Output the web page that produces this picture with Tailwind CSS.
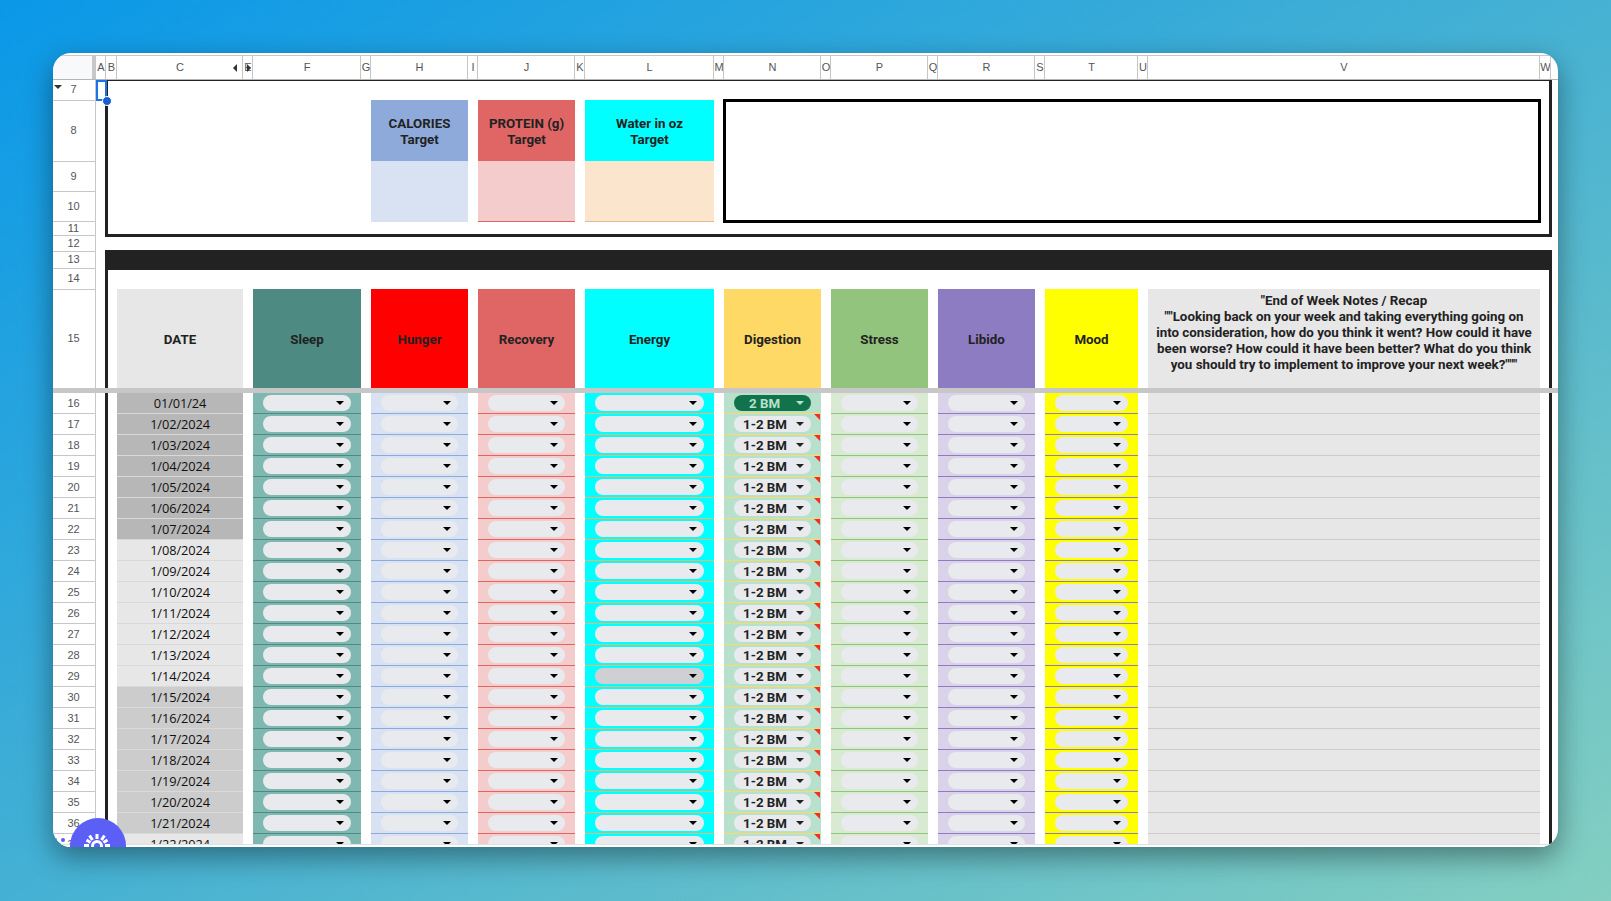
<!DOCTYPE html>
<html lang="en">
<head>
    <meta charset="UTF-8">
    <title>Tracker</title>
    <script src="https://cdn.jsdelivr.net/npm/@tailwindcss/browser@4"></script>
</head>
<body class="w-[1611px] h-[901px] overflow-hidden pt-[53px] pl-[53px] bg-[linear-gradient(150deg,#0a98e8_0%,#4fb5d0_58%,#84cfc1_100%)]">
    <div class="relative w-[1505px] h-[794px] rounded-[18px] overflow-hidden bg-white flex flex-col shadow-[0_10px_28px_rgba(0,0,0,0.4)]">
        <!-- column letters -->
        <div class="h-[27px] pt-[2px] shrink-0">
            <div id="col-letters" class="h-[25px] flex border-t border-b border-t-[#c7c7c7] border-b-[#b5b5b5] font-['Liberation_Sans',sans-serif] text-[11px] text-[#555]">
                <div class="w-[39px] bg-[#f8f9fa]"></div>
                <div class="w-[4px] bg-[#c7c7c7]"></div>
            </div>
        </div>

        <!-- frozen rows 7-15 -->
        <div class="h-[308px] shrink-0 flex">
            <div id="frozen-nums" class="w-[43px] shrink-0 border-r border-[#c7c7c7] font-['Liberation_Sans',sans-serif] text-[11px] text-[#555]"></div>
            <div class="relative flex-1 pl-[9px] pr-[6px]">
                <div class="absolute left-0 top-0 w-[11px] h-[21px] border-2 border-[#1a73e8]"></div>
                <div class="absolute left-[6px] top-[16px] w-[10px] h-[10px] rounded-full bg-[#1a5fd0] border border-white"></div>

                <!-- targets box -->
                <div class="h-[157px] border-x-[3px] border-b-[3px] border-t border-[#222] flex pl-[263px] pt-[19px] font-['Roboto',sans-serif] font-bold text-[13.33px] leading-[16px] text-[#222] text-center">
                    <div class="w-[97px] mr-[10px]">
                        <div class="h-[61px] pt-[2px] bg-[#8eaadb] flex items-center justify-center">CALORIES<br>Target</div>
                        <div class="h-[61px] bg-[#d9e2f3]"></div>
                    </div>
                    <div class="w-[97px] mr-[10px]">
                        <div class="h-[61px] pt-[2px] bg-[#e06666] flex items-center justify-center">PROTEIN (g)<br>Target</div>
                        <div class="h-[61px] bg-[#f4cccc] border-b border-[#e06666]"></div>
                    </div>
                    <div class="w-[129px] mr-[9px]">
                        <div class="h-[61px] pt-[2px] bg-[#00ffff] flex items-center justify-center">Water in oz<br>Target</div>
                        <div class="h-[61px] bg-[#fce5cd] border-b border-[#e6b98c]"></div>
                    </div>
                    <div class="w-[818px] h-[124px] mt-[-1px] border-[3px] border-black"></div>
                </div>

                <div class="h-[13px]"></div>
                <div class="h-[20px] bg-[#222]"></div>

                <!-- table headers -->
                <div class="h-[118px] border-x-[3px] border-[#222] px-[9px] pt-[19px] flex gap-[10px] font-['Roboto',sans-serif] font-bold text-[13.33px] leading-[16px] text-[#222] text-center">
                    <div class="w-[126px] pt-[2px] bg-[#e7e7e7] flex items-center justify-center">DATE</div>
                    <div class="w-[108px] pt-[2px] bg-[#4c8a82] flex items-center justify-center">Sleep</div>
                    <div class="w-[97px] pt-[2px] bg-[#ff0000] flex items-center justify-center">Hunger</div>
                    <div class="w-[97px] pt-[2px] bg-[#e06666] flex items-center justify-center">Recovery</div>
                    <div class="w-[129px] pt-[2px] bg-[#00ffff] flex items-center justify-center">Energy</div>
                    <div class="w-[97px] pt-[2px] bg-[#ffd966] flex items-center justify-center">Digestion</div>
                    <div class="w-[97px] pt-[2px] bg-[#93c47d] flex items-center justify-center">Stress</div>
                    <div class="w-[97px] pt-[2px] bg-[#8e7cc3] flex items-center justify-center">Libido</div>
                    <div class="w-[93px] pt-[2px] bg-[#ffff00] flex items-center justify-center">Mood</div>
                    <div class="w-[392px] bg-[#e7e7e7] pt-[4px] px-[4px]">"End of Week Notes / Recap<br>""Looking back on your week and taking everything going on into consideration, how do you think it went? How could it have been worse? How could it have been better? What do you think you should try to implement to improve your next week?"""</div>
                </div>
            </div>
        </div>

        <!-- freeze bar -->
        <div class="h-[5px] shrink-0 bg-[#c7c7c7]"></div>

        <!-- rows 16+ -->
        <div class="h-[451px] shrink-0 flex overflow-hidden">
            <div id="row-nums" class="w-[43px] shrink-0 border-r border-[#c7c7c7] font-['Liberation_Sans',sans-serif] text-[11px] text-[#555]"></div>
            <div class="flex-1 pl-[9px] pr-[6px]">
                <div id="rows" class="border-x-[3px] border-[#222] px-[9px]"></div>
            </div>
        </div>
        <div class="h-[3px] shrink-0 bg-white border-t border-[#e0e0e0]"></div>

        <!-- little dots peeking out beside the bubble -->
        <div class="absolute left-[1px] top-[785px] w-[3px] h-[3px] rounded-full bg-[#5b5ff5]"></div>
        <div class="absolute left-[8px] top-[785px] w-[4px] h-[4px] rounded-full bg-[#5b5ff5]"></div>

        <!-- chat bubble -->
        <div class="absolute left-[17px] top-[765px] w-[56px] h-[56px] rounded-full bg-[#5b5ff5] flex items-center justify-center">
            <svg width="30" height="30" viewBox="0 0 30 30" fill="none" stroke="#fff" stroke-width="3">
                <path d="M14 8V3M9.500 9 6.500 4.500M18.500 9 21.500 4.500M7.500 11.500 3.500 9M20.500 11.500 24.500 9M6 14.500H1M22 14.500H27"/>
                <circle cx="14" cy="15" r="4.500" stroke-width="3"/>
            </svg>
        </div>
    </div>

    <script>
        const ARROW_DARK = "w-0 h-0 border-x-[4px] border-t-[4px] border-x-transparent border-t-black";

        // column letters and widths, starting at column A
        const letters = [["A",10],["B",11],["C",126],["",10],["F",108],["G",10],["H",97],["I",10],["J",97],["K",10],["L",129],["M",10],["N",97],["O",10],["P",97],["Q",10],["R",97],["S",10],["T",93],["U",10],["V",392],["W",11]];
        const colLetters = document.getElementById("col-letters");
        letters.forEach(([name, w]) => {
            let inner = name;
            if (name === "C") {
                inner = `C<span class="absolute right-[5px] top-[8px] w-0 h-0 border-y-[4px] border-r-[4px] border-y-transparent border-r-[#333]"></span>`;
            }
            if (name === "") {
                inner = `<span>E</span><span class="absolute right-[1px] top-[8px] w-0 h-0 border-y-[4px] border-l-[4px] border-y-transparent border-l-[#333]"></span>`;
            }
            colLetters.insertAdjacentHTML("beforeend",
                `<div class="relative flex items-center justify-center pl-[1px] border-r border-[#c7c7c7] overflow-hidden" style="width:${w}px">${inner}</div>`);
        });

        // frozen row numbers: number, height, nudge up
        const frozen = [[7,21,true],[8,61,true],[9,30],[10,30],[11,14],[12,16],[13,17,true],[14,21,true],[15,98,true]];
        document.getElementById("frozen-nums").innerHTML = frozen.map(([n, h, up]) => `
            <div class="relative flex items-center justify-center pr-[1px] ${up ? "pb-[2px]" : ""} border-b border-[#c7c7c7] last:border-b-0" style="height:${h}px">
                ${n === 7 ? '<span class="absolute left-[1px] top-[5px] w-0 h-0 border-x-[4px] border-t-[4px] border-x-transparent border-t-[#333]"></span>' : ''}${n}
            </div>`).join("");

        const rowNums = document.getElementById("row-nums");
        for (let n = 16; n <= 37; n++) {
            rowNums.insertAdjacentHTML("beforeend", `<div class="h-[21px] flex items-center justify-center pr-[1px] border-b border-[#c7c7c7]">${n}</div>`);
        }

        function dateFor(n) {
            if (n === 16) return "01/01/24";
            const d = n - 15;
            return "1/" + String(d).padStart(2, "0") + "/2024";
        }
        function dateBg(n) {
            if (n <= 22) return "bg-[#b7b7b7]";
            if (n <= 29) return "bg-[#e7e7e7]";
            if (n <= 36) return "bg-[#cccccc]";
            return "bg-[#e7e7e7]";
        }

        function pill(greyed) {
            return `<div class="w-full h-[16px] rounded-full ${greyed ? "bg-[#cfd0d3]" : "bg-[#e8eaed]"} flex items-center justify-end pr-[7px]"><span class="${ARROW_DARK}"></span></div>`;
        }

        const cols = {
            sleep: "w-[108px] px-[10px] pt-[2px] bg-[#7eb8b0] border-b border-[#4c8a82]",
            hunger: "w-[97px] px-[10px] pt-[2px] bg-[#d9e2f3] border-b border-[#8eaadb]",
            recovery: "w-[97px] px-[10px] pt-[2px] bg-[#f4cccc] border-b border-[#e06666]",
            energy: "w-[129px] px-[10px] pt-[2px] bg-[#00ffff] border-b border-[#f6b26b]",
            stress: "w-[97px] px-[10px] pt-[2px] bg-[#d9ead3] border-b border-[#93c47d]",
            libido: "w-[97px] px-[10px] pt-[2px] bg-[#d9d2e9] border-b border-[#8e7cc3]",
            mood: "w-[93px] px-[10px] pt-[2px] bg-[#ffff00] border-b border-[#8e7cc3]"
        };

        function digestion(n) {
            const base = "relative w-[97px] px-[10px] pt-[2px] bg-[#b7e1cd] border-b border-[#ffd966]";
            if (n === 16) {
                return `<div class="${base}"><div class="h-[16px] rounded-full bg-[#11734b] flex items-center justify-between pl-[15px] pr-[7px] font-['Roboto',sans-serif] font-bold text-[13.33px] text-[#b7e1cd]"><span class="pt-[1px]">2 BM</span><span class="w-0 h-0 border-x-[4px] border-t-[4px] border-x-transparent border-t-[#b7e1cd]"></span></div></div>`;
            }
            return `<div class="${base}"><span class="absolute right-[1px] top-0 w-0 h-0 border-l-[6px] border-t-[6px] border-l-transparent border-t-[#ea3323]"></span><div class="h-[16px] rounded-full bg-[#e8eaed] flex items-center justify-between pl-[9px] pr-[7px] font-['Roboto',sans-serif] font-bold text-[13.33px] text-[#222]"><span class="pt-[1px]">1-2 BM</span><span class="w-0 h-0 border-x-[4px] border-t-[4px] border-x-transparent border-t-[#222]"></span></div></div>`;
        }

        const rows = document.getElementById("rows");
        for (let n = 16; n <= 37; n++) {
            rows.insertAdjacentHTML("beforeend", `
                <div class="h-[21px] flex gap-[10px]">
                    <div class="w-[126px] ${dateBg(n)} border-b border-[#d9d9d9] pt-[1px] flex items-center justify-center font-['Open_Sans',sans-serif] text-[12.8px] tracking-[-0.1px] text-[#111]">${dateFor(n)}</div>
                    <div class="${cols.sleep}">${pill(false)}</div>
                    <div class="${cols.hunger}">${pill(false)}</div>
                    <div class="${cols.recovery}">${pill(false)}</div>
                    <div class="${cols.energy}">${pill(n === 29)}</div>
                    ${digestion(n)}
                    <div class="${cols.stress}">${pill(false)}</div>
                    <div class="${cols.libido}">${pill(false)}</div>
                    <div class="${cols.mood}">${pill(false)}</div>
                    <div class="w-[392px] bg-[#e7e7e7] border-b border-[#cccccc]"></div>
                </div>`);
        }
    </script>
</body>
</html>
